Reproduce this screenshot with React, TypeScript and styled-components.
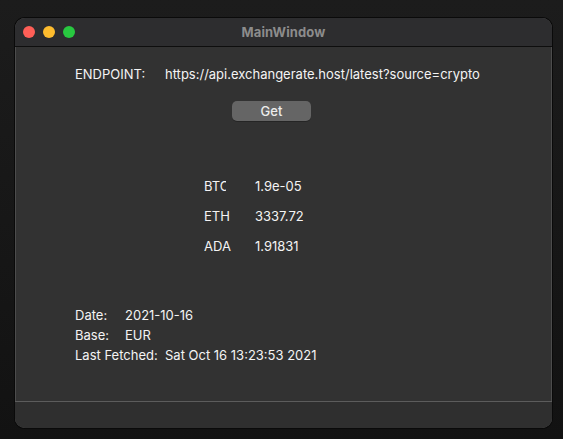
import React from "react";
import styled, { createGlobalStyle } from "styled-components";

const GlobalStyle = createGlobalStyle`
  html, body {
    margin: 0;
    padding: 0;
    height: 100%;
  }
  body {
    background: linear-gradient(#1c1c1c, #121212);
    font-family: Inter, "Liberation Sans", sans-serif;
    -webkit-font-smoothing: antialiased;
  }
`;

const Page = styled.div({
  padding: "18px 11px 11px 15px",
  boxSizing: "border-box",
  width: 563,
  height: 439
});

const Window = styled.div({
  width: 537,
  height: 410,
  display: "flex",
  flexDirection: "column",
  borderRadius: 10,
  overflow: "hidden",
  background: "#323232",
  boxShadow: "0 0 0 1px #0a0a0a, inset 0 0 0 1px #4c4c4c",
  boxSizing: "border-box"
});

const TitleBar = styled.div({
  position: "relative",
  height: 28,
  flexShrink: 0,
  display: "flex",
  alignItems: "center",
  justifyContent: "center",
  background: "#2d2d2f",
  borderBottom: "1px solid #0e0e0e"
});

const Lights = styled.div({
  position: "absolute",
  left: 8,
  top: 8,
  display: "flex",
  gap: 8
});

const Light = styled.span<{ $color: string }>(({ $color }) => ({
  width: 12,
  height: 12,
  borderRadius: "50%",
  background: $color
}));

const Title = styled.span({
  color: "#8c8c8c",
  fontSize: 13,
  fontWeight: 700,
  letterSpacing: 0.1
});

const Content = styled.div({
  flex: 1,
  padding: "20px 0 0 60px",
  color: "#f4f4f4",
  fontSize: 13
});

const EndpointRow = styled.div({
  display: "flex",
  lineHeight: "15px"
});

const EndpointLabel = styled.span({
  width: 90
});

const GetButton = styled.button({
  display: "block",
  marginTop: 19,
  marginLeft: 157,
  width: 79,
  height: 20,
  border: "none",
  borderRadius: 5,
  background: "#656565",
  color: "#ececec",
  fontFamily: "inherit",
  fontSize: 13,
  fontWeight: 500,
  padding: 0,
  boxShadow: "0 1px 0 rgba(0,0,0,0.25)"
});

const Rates = styled.div({
  marginTop: 57,
  marginLeft: 129,
  display: "grid",
  gridTemplateColumns: "51px auto",
  rowGap: 14,
  lineHeight: "16px"
});

const Coin = styled.span<{ $clip?: number }>(({ $clip }) => ({
  display: "block",
  overflow: "hidden",
  whiteSpace: "nowrap",
  width: $clip ?? "auto"
}));

const Info = styled.div({
  marginTop: 51,
  lineHeight: "20px"
});

const InfoRow = styled.div<{ $labelWidth: number }>(({ $labelWidth }) => ({
  display: "flex",
  "& > span:first-child": {
    width: $labelWidth
  }
}));

const StatusBar = styled.div({
  height: 26,
  flexShrink: 0,
  background: "#2f2f2f",
  borderTop: "1px solid #5c5c5c"
});

const rates = [
  { coin: "BTC", value: "1.9e-05", clip: 22 },
  { coin: "ETH", value: "3337.72" },
  { coin: "ADA", value: "1.91831" }
];

export default function App() {
  return (
    <Page>
      <GlobalStyle />
      <Window>
        <TitleBar>
          <Lights>
            <Light $color="#ff5f57" />
            <Light $color="#febc2e" />
            <Light $color="#28c840" />
          </Lights>
          <Title>MainWindow</Title>
        </TitleBar>
        <Content>
          <EndpointRow>
            <EndpointLabel>ENDPOINT:</EndpointLabel>
            <span>https://api.exchangerate.host/latest?source=crypto</span>
          </EndpointRow>
          <GetButton>Get</GetButton>
          <Rates>
            {rates.map(r => (
              <React.Fragment key={r.coin}>
                <Coin $clip={r.clip}>{r.coin}</Coin>
                <span>{r.value}</span>
              </React.Fragment>
            ))}
          </Rates>
          <Info>
            <InfoRow $labelWidth={50}>
              <span>Date:</span>
              <span>2021-10-16</span>
            </InfoRow>
            <InfoRow $labelWidth={50}>
              <span>Base:</span>
              <span>EUR</span>
            </InfoRow>
            <InfoRow $labelWidth={90}>
              <span>Last Fetched:</span>
              <span>Sat Oct 16 13:23:53 2021</span>
            </InfoRow>
          </Info>
        </Content>
        <StatusBar />
      </Window>
    </Page>
  );
}
